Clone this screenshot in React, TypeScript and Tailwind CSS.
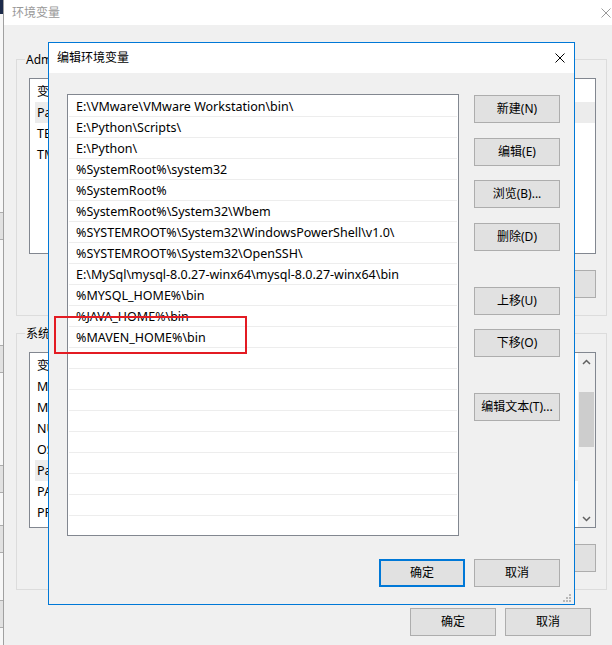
const paths = [
  "E:\\VMware\\VMware Workstation\\bin\\",
  "E:\\Python\\Scripts\\",
  "E:\\Python\\",
  "%SystemRoot%\\system32",
  "%SystemRoot%",
  "%SystemRoot%\\System32\\Wbem",
  "%SYSTEMROOT%\\System32\\WindowsPowerShell\\v1.0\\",
  "%SYSTEMROOT%\\System32\\OpenSSH\\",
  "E:\\MySql\\mysql-8.0.27-winx64\\mysql-8.0.27-winx64\\bin",
  "%MYSQL_HOME%\\bin",
  "%JAVA_HOME%\\bin",
  "%MAVEN_HOME%\\bin",
]

const rows = [...paths, ...Array(9).fill("")]

const userVars = [
  { name: "Path", selected: true },
  { name: "TEMP" },
  { name: "TMP" },
]

const sysVars = [
  { name: "MAVEN_HOME" },
  { name: "MYSQL_HOME" },
  { name: "NUMBER_OF_PROCESSORS" },
  { name: "OS" },
  { name: "Path", selected: true },
  { name: "PATHEXT" },
  { name: "PROCESSOR_ARCHITECTURE" },
]

function WinButton({ label, primary }: { label?: string; primary?: boolean }) {
  return (
    <div
      className={
        primary
          ? "h-[28px] w-[86px] shrink-0 bg-[#e1e1e1] border-2 border-[#0078d7] flex items-center justify-center text-black"
          : "h-[28px] w-[86px] shrink-0 bg-[#e1e1e1] border border-[#adadad] flex items-center justify-center text-black"
      }
    >
      {label}
    </div>
  )
}

function CloseIcon({ color }: { color: string }) {
  return (
    <svg width="10" height="10" viewBox="0 0 10 10" className="shrink-0">
      <path d="M0.5 0.5L9.5 9.5M9.5 0.5L0.5 9.5" stroke={color} strokeWidth={1} />
    </svg>
  )
}

function VarList({ vars, scroll }: { vars: { name: string; selected?: boolean }[]; scroll?: boolean }) {
  return (
    <div className="ml-[12px] mt-[10px] w-[567px] h-[176px] border border-[#828790] bg-white flex overflow-hidden">
      <div className="flex-1 flex flex-col">
        <div className="h-[23px] flex items-center pl-[7px] pt-[2px] shrink-0">
          <span>变量</span>
        </div>
        {vars.map((v) => (
          <div
            key={v.name}
            className={
              v.selected
                ? "ml-[5px] h-[21px] flex items-center pl-[2px] pt-[2px] bg-[#ececec] shrink-0 text-[12.5px]"
                : "ml-[5px] h-[21px] flex items-center pl-[2px] pt-[2px] shrink-0 text-[12.5px]"
            }
          >
            <span className="whitespace-nowrap">{v.name}</span>
          </div>
        ))}
      </div>
      {scroll && (
        <div className="w-[17px] bg-[#f0f0f0] flex flex-col shrink-0">
          <div className="h-[17px] flex items-center justify-center">
            <svg width="9" height="6" viewBox="0 0 9 6">
              <path d="M1 5L4.5 1.5L8 5" stroke="#606060" strokeWidth={1.5} fill="none" />
            </svg>
          </div>
          <div className="flex-1 px-[1px]">
            <div className="mt-[22px] h-[55px] bg-[#cdcdcd]" />
          </div>
          <div className="h-[17px] flex items-center justify-center">
            <svg width="9" height="6" viewBox="0 0 9 6">
              <path d="M1 1L4.5 4.5L8 1" stroke="#606060" strokeWidth={1.5} fill="none" />
            </svg>
          </div>
        </div>
      )}
    </div>
  )
}

function GroupBox({ label, children }: { label: string; children: React.ReactNode }) {
  return (
    <div className="w-[591px] h-[257px] border border-[#dcdcdc] flex flex-col">
      <span className="-mt-[8px] ml-[8px] px-[1px] w-fit h-[16px] leading-[16px] bg-[#f0f0f0] whitespace-nowrap">{label}</span>
      {children}
    </div>
  )
}

export default function App() {
  return (
    <div className="relative w-[612px] h-[645px] overflow-hidden bg-[#f0f0f0] text-[12px] text-black font-['Noto_Sans','Noto_Sans_CJK_SC',sans-serif]">
      {/* window further behind, left edge only */}
      <div className="absolute left-0 top-0 w-[3px] h-full bg-[#f7f7f7] flex flex-col">
        <div className="h-[14px] bg-[#1c2b4a]" />
        <div className="h-[198px]" />
        <div className="h-[28px] bg-[#e1e1e1] border-y border-[#adadad]" />
        <div className="h-[105px]" />
        <div className="h-[28px] bg-[#e1e1e1] border-y border-[#adadad]" />
        <div className="h-[92px]" />
        <div className="h-[28px] bg-[#e1e1e1] border-y border-[#adadad]" />
        <div className="h-[32px]" />
        <div className="h-[28px] bg-[#e1e1e1] border-y border-[#adadad]" />
        <div className="h-[47px]" />
        <div className="h-[28px] bg-[#e1e1e1] border-y border-[#adadad]" />
      </div>

      {/* 环境变量 window */}
      <div className="absolute left-[3px] top-0 w-[640px] h-[660px] bg-[#f0f0f0] border-l border-[#a0a0a0] flex flex-col">
        <div className="h-[25px] bg-white flex items-center justify-between pl-[8px] pr-[32px] shrink-0">
          <span className="text-[#999999]">环境变量</span>
          <CloseIcon color="#9a9a9a" />
        </div>
        <div className="pl-[12px] pt-[34px] flex flex-col">
          <GroupBox label="Administrator 的用户变量(U)">
            <VarList vars={userVars} />
            <div className="mt-[16px] w-[579px] flex justify-end gap-[10px]">
              <WinButton />
              <WinButton />
              <WinButton />
            </div>
          </GroupBox>
          <div className="mt-[17px]">
            <GroupBox label="系统变量(S)">
              <VarList vars={sysVars} scroll />
              <div className="mt-[16px] w-[579px] flex justify-end gap-[10px]">
                <WinButton />
                <WinButton />
                <WinButton />
              </div>
            </GroupBox>
          </div>
          <div className="mt-[18px] w-[591px] pr-[16px] flex justify-end gap-[9px]">
            <WinButton label="确定" />
            <WinButton label="取消" />
          </div>
        </div>
      </div>

      {/* 编辑环境变量 dialog */}
      <div className="absolute left-[48px] top-[42px] w-[527px] h-[563px] border border-[#0078d7] bg-[#f0f0f0] flex flex-col">
        <div className="h-[30px] bg-white flex items-center justify-between pl-[8px] pr-[9px] shrink-0">
          <span>编辑环境变量</span>
          <CloseIcon color="#000000" />
        </div>
        <div className="pl-[18px] pr-[14px] pt-[21px] flex flex-col">
          <div className="flex gap-[15px]">
            <div className="w-[392px] h-[442px] border border-[#828790] bg-white pt-[1px] overflow-hidden flex flex-col">
              {rows.map((p, i) => (
                <div
                  key={i}
                  className="h-[21px] shrink-0 border-b border-[#ededed] mx-[1px] pl-[7px] pt-[2px] flex items-center whitespace-nowrap text-[12.5px]"
                >
                  {p}
                </div>
              ))}
            </div>
            <div className="flex flex-col pt-[1px]">
              <WinButton label="新建(N)" />
              <div className="mt-[15px]"><WinButton label="编辑(E)" /></div>
              <div className="mt-[14px]"><WinButton label="浏览(B)..." /></div>
              <div className="mt-[15px]"><WinButton label="删除(D)" /></div>
              <div className="mt-[36px]"><WinButton label="上移(U)" /></div>
              <div className="mt-[14px]"><WinButton label="下移(O)" /></div>
              <div className="mt-[36px]"><WinButton label="编辑文本(T)..." /></div>
            </div>
          </div>
          <div className="mt-[23px] flex justify-end gap-[9px]">
            <WinButton label="确定" primary />
            <WinButton label="取消" />
          </div>
        </div>
        <svg width="9" height="9" viewBox="0 0 9 9" className="absolute right-[2px] bottom-[1px]">
          <rect x="6" y="0" width="2" height="2" fill="#b8b8b8" />
          <rect x="3" y="3" width="2" height="2" fill="#b8b8b8" />
          <rect x="6" y="3" width="2" height="2" fill="#b8b8b8" />
          <rect x="0" y="6" width="2" height="2" fill="#b8b8b8" />
          <rect x="3" y="6" width="2" height="2" fill="#b8b8b8" />
          <rect x="6" y="6" width="2" height="2" fill="#b8b8b8" />
        </svg>
      </div>

      {/* red highlight annotation */}
      <div className="absolute left-[54px] top-[316px] w-[193px] h-[38px] border-2 border-[#e31b23]" />
    </div>
  )
}
